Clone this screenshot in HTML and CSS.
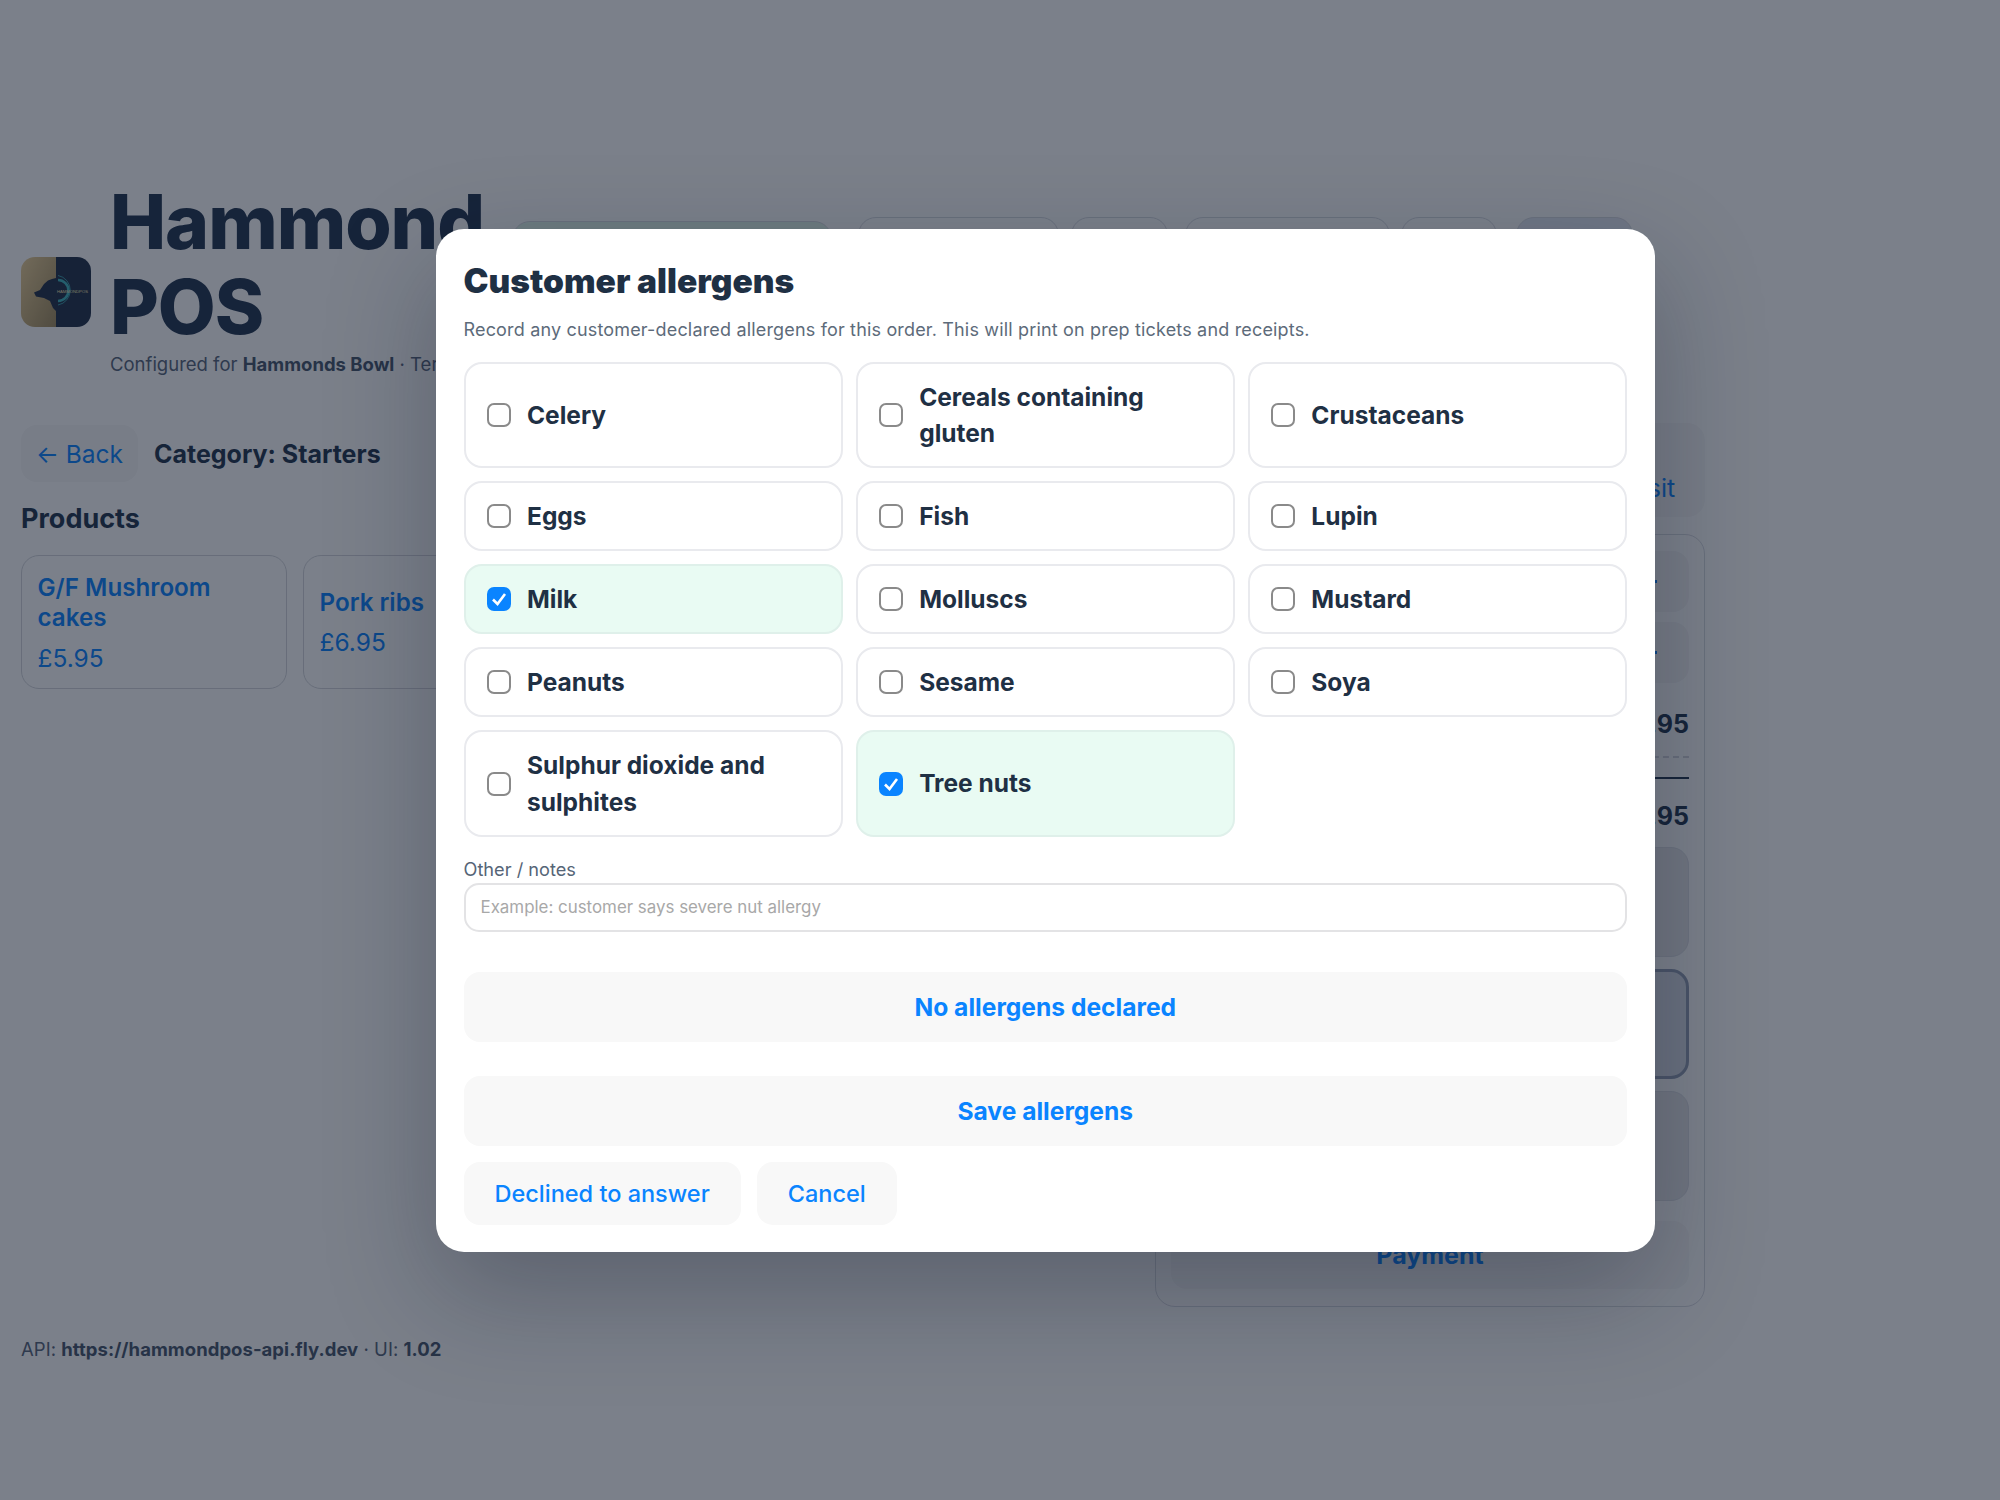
FILE: index.html
```html
<!DOCTYPE html>
<html lang="en">
<head>
  <meta charset="UTF-8" />
  <meta name="viewport" content="width=device-width, initial-scale=1" />
  <title>Hammond POS</title>
  <link rel="stylesheet" href="styles.css">
</head>
<body>
  <div class="page">
    <header class="header">
      <svg class="logo" viewBox="0 0 70 70" aria-hidden="true">
        <defs>
          <linearGradient id="gold" x1="0" y1="0" x2="1" y2="1">
            <stop offset="0" stop-color="#ecd096"/>
            <stop offset="1" stop-color="#a08b5c"/>
          </linearGradient>
          <clipPath id="logo-clip"><rect width="70" height="70" rx="14"/></clipPath>
        </defs>
        <g clip-path="url(#logo-clip)">
          <rect width="35" height="70" fill="url(#gold)"/>
          <rect x="35" width="35" height="70" fill="#1f2f48"/>
          <path d="M13 35.5 L19 33 L23 27 L27 23.5 L31 22 L35 21 L35 54 L32 51 L29 44 L23 41 L15 39.5 Z" fill="#1f2f48"/>
          <path d="M37 18.5 A15 15 0 0 1 37 48" fill="none" stroke="#3fb4bc" stroke-width="0.8"/>
          <path d="M37 23 A10.5 10.5 0 0 1 37 44" fill="none" stroke="#3fb4bc" stroke-width="2.6"/>
          <text class="logo-text" x="36" y="35.5">HAMMONDPOS</text>
        </g>
      </svg>
      <div class="brand">
        <h1>Hammond POS</h1>
        <div class="brand-sub">Configured for <strong>Hammonds Bowl</strong> · Terminal</div>
      </div>
      <nav class="tabs">
        <div class="tab tab-green tab-1"></div>
        <div class="tab tab-2"></div>
        <div class="tab tab-3"></div>
        <div class="tab tab-4"></div>
        <div class="tab tab-5"></div>
        <div class="tab tab-blue tab-6"></div>
      </nav>
    </header>

    <main class="main">
      <section class="catalog">
        <div class="catalog-top">
          <button class="back"><span class="arrow">←</span> Back</button>
          <div class="category">Category: Starters</div>
        </div>
        <h2>Products</h2>
        <div class="products">
          <div class="product">
            <div class="product-name">G/F Mushroom cakes</div>
            <div class="product-price">£5.95</div>
          </div>
          <div class="product">
            <div class="product-name">Pork ribs</div>
            <div class="product-price">£6.95</div>
          </div>
        </div>
      </section>

      <aside class="side">
        <button class="deposit">Deposit</button>
        <div class="ticket">
          <div class="ticket-action"><span class="dot"></span></div>
          <div class="ticket-action"><span class="dot"></span></div>
          <div class="ticket-line">£5.95</div>
          <div class="ticket-rule"></div>
          <div class="ticket-line ticket-total">£5.95</div>
          <div class="ticket-block"></div>
          <div class="ticket-block ticket-block-active"></div>
          <div class="ticket-block"></div>
          <button class="payment">Payment</button>
        </div>
      </aside>
    </main>

    <footer class="footer">API: <strong>https://hammondpos-api.fly.dev</strong> · UI: <strong>1.02</strong></footer>
  </div>

  <div class="overlay">
    <div class="modal">
      <h3>Customer allergens</h3>
      <p class="modal-sub">Record any customer-declared allergens for this order. This will print on prep tickets and receipts.</p>

      <div class="allergens">
        <label class="allergen"><span class="check"></span>Celery</label>
        <label class="allergen"><span class="check"></span>Cereals containing gluten</label>
        <label class="allergen"><span class="check"></span>Crustaceans</label>
        <label class="allergen"><span class="check"></span>Eggs</label>
        <label class="allergen"><span class="check"></span>Fish</label>
        <label class="allergen"><span class="check"></span>Lupin</label>
        <label class="allergen selected"><span class="check"><svg viewBox="0 0 24 24"><path d="M6 12.5 L10.5 17 L18 7"/></svg></span>Milk</label>
        <label class="allergen"><span class="check"></span>Molluscs</label>
        <label class="allergen"><span class="check"></span>Mustard</label>
        <label class="allergen"><span class="check"></span>Peanuts</label>
        <label class="allergen"><span class="check"></span>Sesame</label>
        <label class="allergen"><span class="check"></span>Soya</label>
        <label class="allergen"><span class="check"></span>Sulphur dioxide and sulphites</label>
        <label class="allergen selected"><span class="check"><svg viewBox="0 0 24 24"><path d="M6 12.5 L10.5 17 L18 7"/></svg></span>Tree nuts</label>
      </div>

      <label class="notes-label" for="notes">Other / notes</label>
      <input class="notes" id="notes" type="text" placeholder="Example: customer says severe nut allergy">

      <button class="btn btn-wide btn-none">No allergens declared</button>
      <button class="btn btn-wide btn-save">Save allergens</button>
      <div class="modal-actions">
        <button class="btn">Declined to answer</button>
        <button class="btn">Cancel</button>
      </div>
    </div>
  </div>
</body>
</html>
```

FILE: styles.css
```css
* {
  box-sizing: border-box;
}

body {
  margin: 0;
  background: #fff;
  color: #21344d;
  font-family: Inter, "Noto Sans", sans-serif;
}

button {
  font-family: inherit;
  border: none;
}

.page {
  width: 1726px;
  height: 1500px;
  padding: 179px 21px 0;
}

/* header */
.header {
  display: flex;
  align-items: flex-start;
  height: 244px;
}

.logo {
  flex: none;
  width: 70px;
  height: 70px;
  margin-top: 78px;
  margin-right: 19px;
}

.logo-text {
  font-family: "Liberation Sans", sans-serif;
  font-size: 4.2px;
  fill: #f4e4b0;
}

.brand {
  flex: none;
  width: 402px;
}

h1 {
  margin: 0;
  width: 380px;
  font-size: 75px;
  line-height: 85px;
  font-weight: 800;
  color: #21344f;
  letter-spacing: -0.014em;
}

.brand-sub {
  margin-top: 4px;
  font-size: 18.5px;
  line-height: 22px;
  white-space: nowrap;
  color: #56647a;
}

.brand-sub strong {
  font-weight: 700;
  color: #45556c;
}

.tabs {
  display: flex;
  margin-top: 38px;
}

.tab {
  height: 70px;
  border: 1.5px solid #d8dbe1;
  border-radius: 18px;
}

.tab-green {
  background: #e1f7e9;
  margin-top: 4px;
}

.tab-blue {
  background: #e5e8f4;
}

.tab-1 { width: 320px; }
.tab-2 { width: 201px; margin-left: 26px; }
.tab-3 { width: 97px; margin-left: 12px; }
.tab-4 { width: 205px; margin-left: 17px; }
.tab-5 { width: 96px; margin-left: 11px; }
.tab-6 { width: 117px; margin-left: 19px; }

/* main */
.main {
  display: grid;
  grid-template-columns: 1fr 550px;
  height: 884px;
}

.catalog-top {
  display: flex;
  align-items: center;
  gap: 16px;
  margin-top: 2px;
}

.back {
  width: 117px;
  height: 57px;
  padding: 0;
  border-radius: 16px;
  background: #f8f8f8;
  color: #0a84ff;
  font-size: 24.5px;
}

.arrow {
  font-size: 24px;
}

.category {
  font-size: 25px;
  font-weight: 700;
}

h2 {
  margin: 19.5px 0 0;
  font-size: 27px;
  line-height: 34px;
  font-weight: 700;
}

.products {
  display: flex;
  gap: 16px;
  margin-top: 19px;
}

.product {
  display: flex;
  flex-direction: column;
  justify-content: center;
  width: 266px;
  height: 134px;
  padding: 3px 15.5px 0;
  border: 1.5px solid #d4d6db;
  border-radius: 18px;
}

.product-name {
  font-size: 24.2px;
  line-height: 30.5px;
  font-weight: 600;
  color: #0a84ff;
}

.product-price {
  margin-top: 9px;
  font-size: 24.5px;
  line-height: 31px;
  color: #0a84ff;
}

/* order side */
.deposit {
  display: block;
  width: 100%;
  height: 94px;
  padding: 36px 0 0 400px;
  border-radius: 18px;
  background: #f8f8f8;
  color: #0a84ff;
  font-size: 25px;
}

.ticket {
  height: 773px;
  margin-top: 17px;
  padding: 16px 15px;
  border: 1.5px solid #d8dbe1;
  border-radius: 20px;
}

.ticket-action {
  display: flex;
  align-items: center;
  height: 61px;
  margin-bottom: 10px;
  padding-left: 483px;
  border-radius: 16px;
  background: #f6f6f7;
}

.dot {
  width: 3px;
  height: 3px;
  background: #0a84ff;
}

.ticket-line {
  margin-top: 25px;
  height: 32px;
  text-align: right;
  font-size: 25px;
  line-height: 32px;
  font-weight: 700;
}

.ticket-rule {
  margin-top: 15.5px;
  height: 23px;
  border-top: 2px dashed #d4d7dd;
  border-bottom: 2px solid #21344d;
}

.ticket-line.ticket-total {
  margin-top: 21.5px;
}

.ticket-block {
  height: 110px;
  margin-top: 12px;
  border: 1.5px solid #dddfe4;
  border-radius: 18px;
  background: #e8e9ec;
}

.ticket-total + .ticket-block {
  margin-top: 14.5px;
}

.ticket-block-active {
  border: 3px solid #929eb4;
  background: #d9dde6;
}

.payment {
  display: block;
  width: 100%;
  height: 68px;
  margin-top: 20px;
  border-radius: 16px;
  background: #f8f8f8;
  color: #0a84ff;
  font-size: 25px;
  font-weight: 700;
}

.footer {
  margin-top: 31px;
  font-size: 18.5px;
  line-height: 22px;
  letter-spacing: 0.04px;
  color: #56647a;
}

.footer strong {
  font-weight: 700;
  color: #45556c;
}

/* modal */
.overlay {
  position: absolute;
  top: 0;
  left: 0;
  display: flex;
  justify-content: center;
  align-items: flex-start;
  width: 2000px;
  height: 1500px;
  padding: 229px 0 0 91px;
  background: rgba(15, 23, 42, 0.55);
}

.modal {
  width: 1219px;
  height: 1023px;
  padding: 28px 28px 28px 27.5px;
  border-radius: 28px;
  background: #fff;
  box-shadow: 0 40px 110px rgba(15, 23, 42, 0.3);
}

h3 {
  margin: 3px 0 0;
  font-size: 33.5px;
  line-height: 42px;
  font-weight: 900;
  color: #1f3044;
}

.modal-sub {
  margin: 16px 0 0;
  font-size: 18px;
  line-height: 24px;
  letter-spacing: 0.17px;
  color: #5d6b7a;
}

.allergens {
  display: grid;
  grid-template-columns: repeat(3, 1fr);
  gap: 13px;
  margin-top: 20px;
}

.allergen {
  display: flex;
  align-items: center;
  gap: 16px;
  padding: 14.8px 21.5px;
  border: 2px solid #e9eaee;
  border-radius: 18px;
  font-size: 24.5px;
  line-height: 36.4px;
  font-weight: 700;
  color: #1f3044;
}

.allergen.selected {
  background: #e9fbf3;
  border-color: #dff0ea;
}

.check {
  flex: none;
  width: 24px;
  height: 24px;
  border: 2px solid #8a8a8a;
  border-radius: 7px;
  background: #fff;
}

.selected .check {
  border: none;
  background: #0a84ff;
}

.check svg {
  display: block;
  width: 24px;
  height: 24px;
  fill: none;
  stroke: #fff;
  stroke-width: 2.6;
}

.notes-label {
  display: block;
  margin-top: 19px;
  font-size: 18.2px;
  line-height: 26px;
  color: #566577;
}

.notes {
  display: block;
  width: 100%;
  height: 49px;
  margin-top: 1px;
  padding: 0 15px;
  border: 2px solid #e3e3e5;
  border-radius: 15px;
  font-family: inherit;
  font-size: 16.9px;
}

.notes::placeholder {
  color: #a8a8a8;
}

.btn {
  height: 63px;
  padding: 0 31px;
  border-radius: 16px;
  background: #f8f8f8;
  color: #0a84ff;
  font-size: 23.5px;
  font-weight: 500;
}

.btn-wide {
  display: block;
  width: 100%;
  height: 70px;
  font-size: 24.6px;
  font-weight: 700;
}

.btn-none {
  margin-top: 40.5px;
}

.btn-save {
  margin-top: 34px;
}

.modal-actions {
  display: flex;
  gap: 16px;
  margin-top: 16px;
}
```
